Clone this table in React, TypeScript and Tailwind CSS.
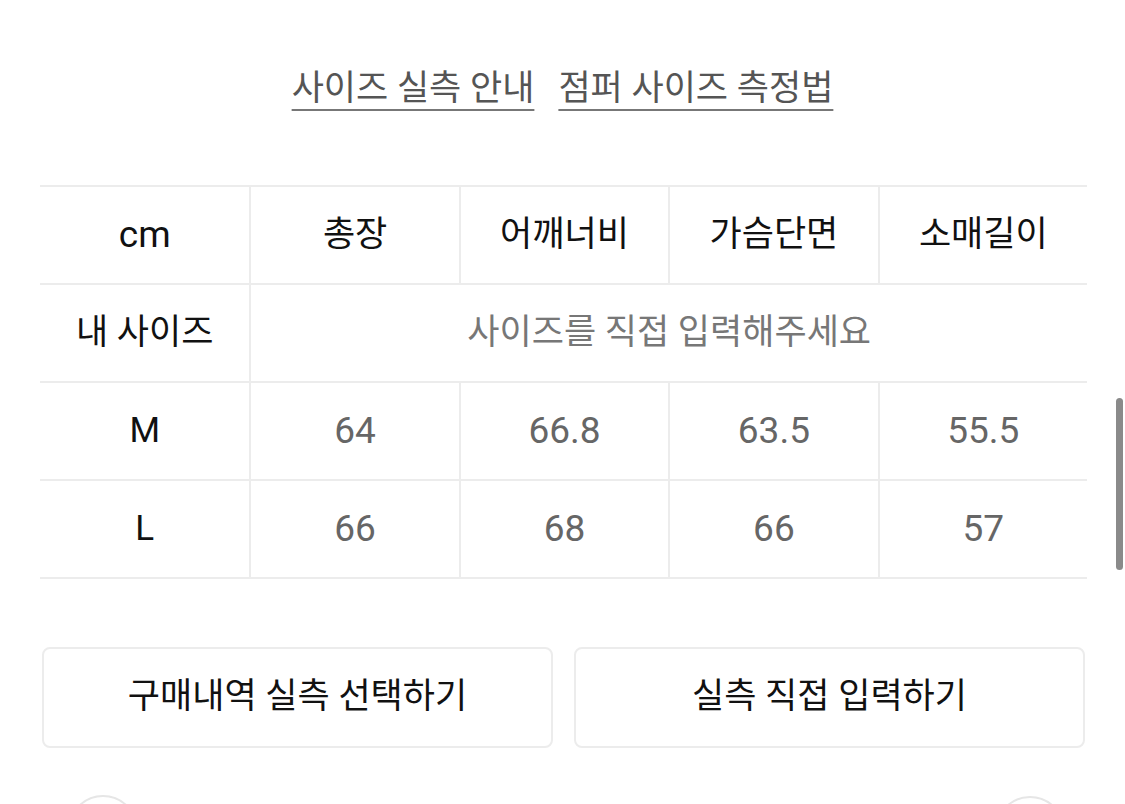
const font = { fontFamily: 'Roboto, "Noto Sans CJK KR", sans-serif' };

const cols = ["총장", "어깨너비", "가슴단면", "소매길이"];
const rows = [
  { size: "M", values: ["64", "66.8", "63.5", "55.5"] },
  { size: "L", values: ["66", "68", "66", "57"] },
];

function Cell({ children, className = "" }: { children: React.ReactNode; className?: string }) {
  return (
    <div className={`flex items-center justify-center h-[98px] border-b-2 border-[#ececec] ${className}`}>
      {children}
    </div>
  );
}

export default function App() {
  return (
    <div className="relative w-[1125px] h-[804px] overflow-hidden bg-white" style={font}>
      <div className="flex justify-center gap-6 pt-[68px] text-[35px] leading-[42px] text-[#555]">
        <a className="underline decoration-2 underline-offset-[9px] decoration-[#777]">사이즈 실측 안내</a>
        <a className="underline decoration-2 underline-offset-[9px] decoration-[#777]">점퍼 사이즈 측정법</a>
      </div>

      <div className="mt-[75px] ml-[40px] w-[1047px] border-t-2 border-[#ececec] grid grid-cols-5 text-[35px]">
        <Cell className="text-[#111] text-[37px]">cm</Cell>
        {cols.map((c) => (
          <Cell key={c} className="border-l-2 text-[#111]">{c}</Cell>
        ))}
        <Cell className="text-[#111]">내 사이즈</Cell>
        <Cell className="col-span-4 border-l-2 text-[#777]">사이즈를 직접 입력해주세요</Cell>
        {rows.map((r) => (
          <div key={r.size} className="contents">
            <Cell className="text-[#111]">{r.size}</Cell>
            {r.values.map((v, i) => (
              <Cell key={i} className="border-l-2 text-[#666] text-[37px]">{v}</Cell>
            ))}
          </div>
        ))}
      </div>

      <div className="mt-[68px] ml-[42px] mr-[40px] grid grid-cols-2 gap-[21px] text-[35px] text-[#111]">
        <button className="h-[101px] rounded-lg border-2 border-[#ececec] bg-white">구매내역 실측 선택하기</button>
        <button className="h-[101px] rounded-lg border-2 border-[#ececec] bg-white">실측 직접 입력하기</button>
      </div>

      <div className="absolute left-[68px] top-[795px] w-[70px] h-[70px] rounded-full border-2 border-[#e6e6e6]" />
      <div className="absolute left-[995px] top-[796px] w-[70px] h-[70px] rounded-full border-2 border-[#e6e6e6]" />

      <div className="absolute left-[1116px] top-[398px] w-[7px] h-[172px] rounded-full bg-[#8a8a8a]" />
    </div>
  );
}
